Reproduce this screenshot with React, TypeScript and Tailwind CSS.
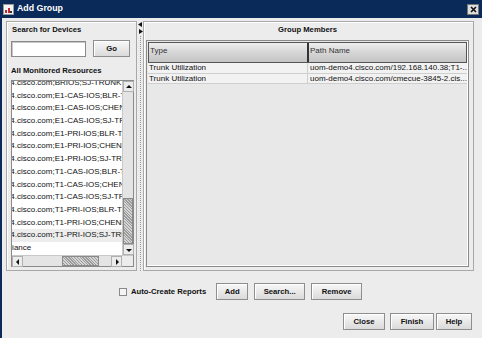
import React from "react";

const font = { fontFamily: '"Liberation Sans", Arial, sans-serif' };

const resources = [
  "uom-demo4.cisco.com;BRIOS;SJ-TRUNK",
  "uom-demo4.cisco.com;E1-CAS-IOS;BLR-TRUNK",
  "uom-demo4.cisco.com;E1-CAS-IOS;CHENNAI-TRUNK",
  "uom-demo4.cisco.com;E1-CAS-IOS;SJ-TRUNK",
  "uom-demo4.cisco.com;E1-PRI-IOS;BLR-TRUNK",
  "uom-demo4.cisco.com;E1-PRI-IOS;CHENNAI-TRUNK",
  "uom-demo4.cisco.com;E1-PRI-IOS;SJ-TRUNK",
  "uom-demo4.cisco.com;T1-CAS-IOS;BLR-TRUNK",
  "uom-demo4.cisco.com;T1-CAS-IOS;CHENNAI-TRUNK",
  "uom-demo4.cisco.com;T1-CAS-IOS;SJ-TRUNK",
  "uom-demo4.cisco.com;T1-PRI-IOS;BLR-TRUNK",
  "uom-demo4.cisco.com;T1-PRI-IOS;CHENNAI-TRUNK",
  "uom-demo4.cisco.com;T1-PRI-IOS;SJ-TRUNK",
  "Compliance",
];

const members = [
  ["Trunk Utilization", "uom-demo4.cisco.com/192.168.140.38;T1-..."],
  ["Trunk Utilization", "uom-demo4.cisco.com/cmecue-3845-2.cis..."],
];

function Btn({ label, w }: { label: string; w: string }) {
  return (
    <div
      className={`${w} h-[17px] flex items-center justify-center border border-[#8e8e8e] bg-gradient-to-b from-[#f8f8f8] to-[#dadada] shadow-[inset_1px_1px_0_#fff] text-[7.7px] font-bold text-[#111]`}
    >
      {label}
    </div>
  );
}

function Arrow({ dir }: { dir: "up" | "down" | "left" | "right" }) {
  const pts = {
    up: "1,5 4,2 7,5",
    down: "1,3 4,6 7,3",
    left: "5,1 2,4 5,7",
    right: "3,1 6,4 3,7",
  }[dir];
  return (
    <div className="w-[11px] h-[11px] flex items-center justify-center bg-[#ececec] border border-[#b0b0b0]">
      <svg width="8" height="8" viewBox="0 0 8 8">
        <polygon points={pts} fill="#111" />
      </svg>
    </div>
  );
}

const thumbBg =
  "bg-[repeating-linear-gradient(45deg,#d4d4d4_0px,#d4d4d4_1px,#9c9c9c_1px,#9c9c9c_2px)]";

export default function App() {
  return (
    <div
      className="w-[482px] h-[338px] bg-[#ececec] flex flex-col border-l-2 border-[#0a2a5a] overflow-hidden"
      style={font}
    >
      {/* title bar */}
      <div className="h-[18px] bg-[#0a2a5a] flex items-center pl-[1px] pr-[3px] shrink-0">
        <div className="w-[11px] h-[11px] bg-[#f4f4f4] border border-[#999] flex items-end justify-center">
          <svg width="9" height="8" viewBox="0 0 9 8">
            <rect x="1" y="4" width="2" height="3" fill="#c0282d" />
            <rect x="4" y="2" width="2" height="5" fill="#c0282d" />
            <rect x="6" y="5" width="2" height="2" fill="#333" />
          </svg>
        </div>
        <span className="ml-[3px] text-white font-bold text-[8.8px]">Add Group</span>
        <div className="ml-auto w-[12px] h-[11px] bg-[#dedede] border border-[#777] flex items-center justify-center">
          <svg width="7" height="7" viewBox="0 0 7 7">
            <path d="M1 1 L6 6 M6 1 L1 6" stroke="#111" strokeWidth="1.6" />
          </svg>
        </div>
      </div>

      {/* content */}
      <div className="flex pl-[4px] pt-[3px] h-[253px] shrink-0">
        {/* left panel */}
        <div className="w-[131px] h-[250px] border border-[#a8a8a8] shadow-[inset_1px_1px_0_#fff] flex flex-col pl-[4px] pt-[3px]">
          <div className="text-[7.7px] leading-[9px] font-bold text-[#111] pl-[1px]">Search for Devices</div>
          <div className="flex mt-[6px] items-center">
            <div className="w-[75px] h-[16px] bg-white border border-[#8a8a8a] shadow-[inset_1px_1px_0_#c8c8c8]" />
            <div className="ml-[7px]">
              <Btn label="Go" w="w-[37px]" />
            </div>
          </div>
          <div className="text-[7.7px] leading-[9px] font-bold text-[#111] mt-[9px]">All Monitored Resources</div>
          <div className="mt-[5px] w-[123px] h-[187px] border border-[#8a8a8a] flex flex-col bg-white">
            <div className="flex flex-1 min-h-0">
              <div className="flex-1 overflow-hidden">
                <div className="-mt-[4px] -ml-[40px] flex flex-col">
                  {resources.map((r, i) => (
                    <div
                      key={i}
                      className={`h-[12.7px] leading-[12.7px] text-[8px] text-[#111] whitespace-nowrap ${
                        i === 12 ? "bg-[#ededed]" : ""
                      } ${i === 13 ? "pl-[17px]" : ""}`}
                    >
                      {r}
                    </div>
                  ))}
                </div>
              </div>
              <div className="w-[11px] flex flex-col bg-[#e4e4e4] border-l border-[#c8c8c8]">
                <Arrow dir="up" />
                <div className="flex-1 flex flex-col justify-end">
                  <div className={`h-[46px] border border-[#8a8a8a] ${thumbBg}`} />
                </div>
                <Arrow dir="down" />
              </div>
            </div>
            <div className="h-[11px] flex bg-[#e4e4e4] border-t border-[#c8c8c8]">
              <Arrow dir="left" />
              <div className="flex-1 flex pl-[39px]">
                <div className={`w-[37px] h-full border border-[#8a8a8a] ${thumbBg}`} />
              </div>
              <Arrow dir="right" />
              <div className="w-[11px] bg-[#ececec]" />
            </div>
          </div>
        </div>

        {/* splitter */}
        <div className="w-[6px] h-[250px] flex flex-col items-center">
          <svg width="5" height="12" viewBox="0 0 5 12" className="mt-[1px]">
            <polygon points="4,0 0,2.5 4,5" fill="#111" />
            <polygon points="1,7 5,9.5 1,12" fill="#111" />
          </svg>
          <div className="mt-[2px] w-0 flex-1 border-l border-dotted border-[#9a9a9a]" />
        </div>

        {/* right panel */}
        <div className="w-[331px] h-[250px] border border-[#a8a8a8] shadow-[inset_1px_1px_0_#fff] flex flex-col pl-[2px] pr-[4px] pt-[3px] pb-[3px]">
          <div className="text-[7.7px] leading-[9px] font-bold text-[#111] text-center">Group Members</div>
          <div className="mt-[6px] flex-1 border border-[#8a8a8a] shadow-[inset_-1px_-1px_0_#fff] bg-[#e8e8e8] flex flex-col p-[1px]">
            <div className="flex h-[21px] border border-[#555] bg-gradient-to-b from-[#eeeeee] via-[#d6d6d6] to-[#c4c4c4]">
              <div className="w-[160px] border-r-2 border-[#333] text-[8px] text-[#333] pl-[1px] pt-[2px]">Type</div>
              <div className="flex-1 text-[8px] text-[#333] pl-[1px] pt-[2px]">Path Name</div>
            </div>
            {members.map((m, i) => (
              <div key={i} className="flex h-[10.5px] leading-[10.5px] bg-[#f2f2f2] border-b border-[#cfcfcf]">
                <div className="w-[160px] border-r border-[#cfcfcf] text-[8px] text-[#111] pl-[1px]">{m[0]}</div>
                <div className="flex-1 text-[8px] text-[#111] pl-[2px] whitespace-nowrap overflow-hidden">{m[1]}</div>
              </div>
            ))}
          </div>
        </div>
      </div>

      {/* action row */}
      <div className="flex items-center mt-[12px] pl-[117px]">
        <div className="w-[8px] h-[8px] border border-[#8a8a8a] bg-[#f4f4f4]" />
        <span className="ml-[4px] text-[7.7px] font-bold text-[#111]">Auto-Create Reports</span>
        <div className="ml-[10px] flex gap-[6px]">
          <Btn label="Add" w="w-[32px]" />
          <Btn label="Search..." w="w-[51px]" />
          <Btn label="Remove" w="w-[51px]" />
        </div>
      </div>

      {/* footer */}
      <div className="flex justify-end items-center mt-[13px] pr-[10px] gap-[5px]">
        <Btn label="Close" w="w-[42px]" />
        <div className="flex gap-[2px]">
          <Btn label="Finish" w="w-[44px]" />
          <Btn label="Help" w="w-[36px]" />
        </div>
      </div>
    </div>
  );
}
